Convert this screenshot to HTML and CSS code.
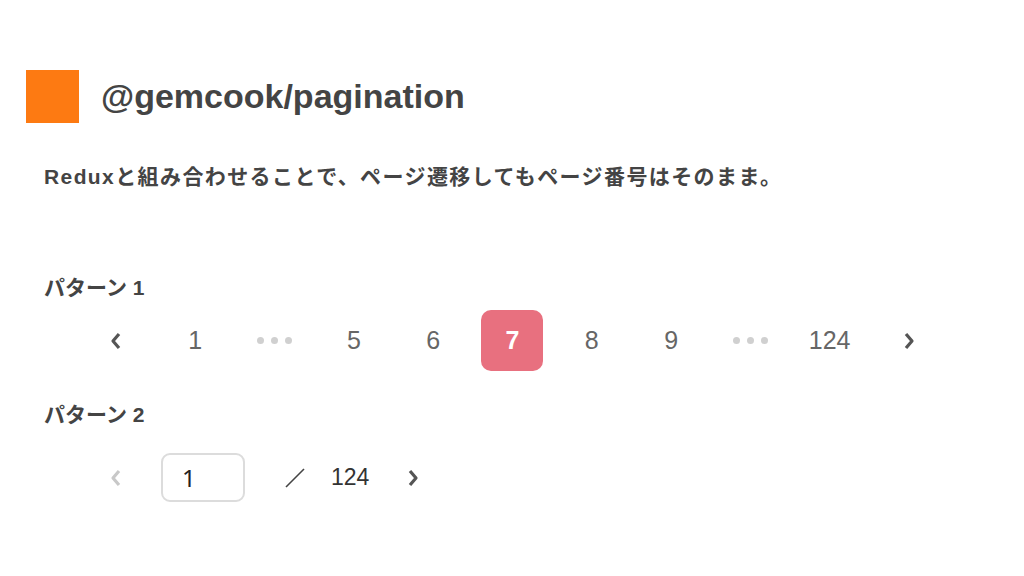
FILE: index.html
```html
<!DOCTYPE html>
<html lang="ja">
<head>
    <meta charset="UTF-8">
    <title>@gemcook/pagination</title>
    <link rel="stylesheet" href="styles.css">
</head>
<body>
    <div class="header">
        <div class="logo"></div>
        <h1>@gemcook/pagination</h1>
    </div>
    <p class="lead">Reduxと組み合わせることで、ページ遷移してもページ番号はそのまま。</p>

    <h2 class="pattern pattern-1">パターン 1</h2>
    <div class="pager">
        <span class="item arrow">
            <svg width="12" height="18" viewBox="0 0 12 18"><polyline points="9,2 3,9 9,16" fill="none" stroke="#555" stroke-width="3.2" stroke-linejoin="round"/></svg>
        </span>
        <span class="item">1</span>
        <span class="item dots"><i></i><i></i><i></i></span>
        <span class="item">5</span>
        <span class="item">6</span>
        <span class="item active">7</span>
        <span class="item">8</span>
        <span class="item">9</span>
        <span class="item dots"><i></i><i></i><i></i></span>
        <span class="item">124</span>
        <span class="item arrow">
            <svg width="12" height="18" viewBox="0 0 12 18"><polyline points="3,2 9,9 3,16" fill="none" stroke="#555" stroke-width="3.2" stroke-linejoin="round"/></svg>
        </span>
    </div>

    <h2 class="pattern pattern-2">パターン 2</h2>
    <div class="pager-input">
        <span class="item arrow">
            <svg width="12" height="18" viewBox="0 0 12 18"><polyline points="9,2 3,9 9,16" fill="none" stroke="#c8c8c8" stroke-width="3.2" stroke-linejoin="round"/></svg>
        </span>
        <div class="page-box">1</div>
        <span class="slash">
            <svg width="22" height="20" viewBox="0 0 22 20"><line x1="2" y1="19" x2="20" y2="1" stroke="#444" stroke-width="1.6"/></svg>
        </span>
        <span class="total">124</span>
        <span class="next">
            <svg width="12" height="18" viewBox="0 0 12 18"><polyline points="3,2 9,9 3,16" fill="none" stroke="#555" stroke-width="3.2" stroke-linejoin="round"/></svg>
        </span>
    </div>
</body>
</html>
```

FILE: styles.css
```css
body {
    margin: 0;
    font-family: "Liberation Sans", "Noto Sans CJK JP", sans-serif;
    color: #4a4a4a;
    background: #fff;
}
.header {
    display: flex;
    align-items: center;
    gap: 22px;
    padding: 70px 0 0 26px;
}
.logo {
    width: 53px;
    height: 53px;
    background-color: #fd7a12;
}
h1 {
    margin: 0;
    font-size: 34px;
    font-weight: bold;
    color: #444;
}
.lead {
    margin: 37px 0 0 44px;
    font-size: 21px;
    font-weight: bold;
    letter-spacing: 1.4px;
    color: #444;
}
.pattern {
    margin: 0 0 0 44px;
    font-size: 21px;
    font-weight: bold;
    color: #444;
    line-height: 26px;
}
.pattern-1 {
    margin-top: 85px;
}
.pattern-2 {
    margin-top: 31px;
}
.pager {
    display: flex;
    align-items: center;
    gap: 17.3px;
    padding-left: 85px;
    margin-top: 9px;
}
.item {
    width: 62px;
    height: 61px;
    display: flex;
    align-items: center;
    justify-content: center;
    font-size: 25px;
    color: #666;
}
.item.active {
    background-color: #e8707f;
    color: #fff;
    font-weight: bold;
    border-radius: 10px;
}
.dots {
    gap: 7px;
}
.dots i {
    width: 7px;
    height: 7px;
    border-radius: 50%;
    background-color: #d0d0d0;
}
.pager-input {
    display: flex;
    align-items: center;
    padding-left: 85px;
    margin-top: 19px;
}
.page-box {
    width: 84px;
    height: 49px;
    box-sizing: border-box;
    margin-left: 14px;
    border: 2px solid #dcdcdc;
    border-radius: 9px;
    display: flex;
    align-items: center;
    padding-left: 19px;
    font-family: "Noto Sans", "Liberation Sans", sans-serif;
    font-size: 24px;
    color: #222;
}
.slash {
    display: flex;
    margin-left: 39px;
}
.total {
    margin-left: 25px;
    font-size: 23px;
    color: #333;
}
.next {
    display: flex;
    margin-left: 38px;
}
```
